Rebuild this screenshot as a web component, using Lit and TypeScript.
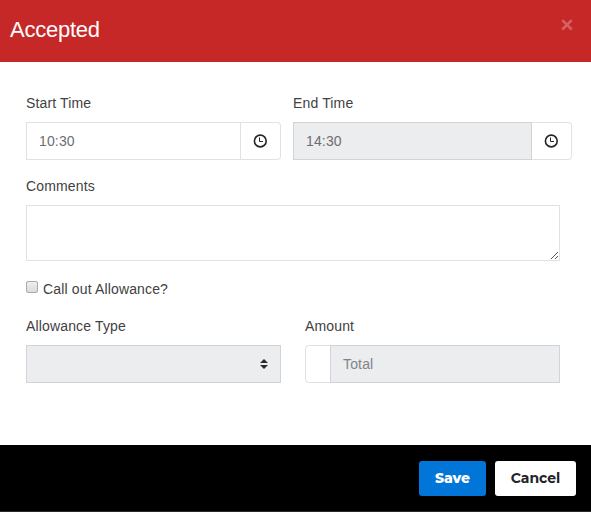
import { LitElement, html, css } from "lit";
import { customElement } from "lit/decorators.js";

const clock = html`<svg class="clock" width="14" height="14" viewBox="0 0 14 14" fill="none">
  <circle cx="7.3" cy="7" r="5.9" stroke="#222427" stroke-width="1.6" />
  <path d="M6.5 3.5V7.5H10" stroke="#222427" stroke-width="1" />
</svg>`;

@customElement("app-root")
export class AppRoot extends LitElement {
  static styles = css`
    :host {
      display: flex;
      flex-direction: column;
      height: 512px;
      background: #fff;
      color: #3f4143;
      font: 14px/20px "Liberation Sans", Arial, sans-serif;
      letter-spacing: 0.15px;
    }
    * { box-sizing: border-box; }
    .header {
      height: 62px;
      flex: none;
      display: flex;
      justify-content: space-between;
      background: #c62828;
      color: #fff;
      padding: 16px 18px 0 10px;
    }
    .title { margin: 0; font-size: 22px; line-height: 28px; font-weight: 400; letter-spacing: -0.25px; }
    .close { margin-top: 3px; width: 12px; height: 12px; }
    .body {
      flex: none;
      height: 383px;
      padding: 31px 31px 0 26px;
    }
    .row { display: flex; }
    .label { display: block; height: 20px; margin-bottom: 9px; }
    .times { gap: 12px; width: 546px; }
    .start { width: 255px; }
    .end { width: 279px; }
    .group { display: flex; height: 38px; }
    .field {
      flex: 1;
      min-width: 0;
      border: 1px solid #e1e2e3;
      padding: 0 12px;
      line-height: 36px;
      color: #6b6e70;
      background: #fff;
    }
    .disabled { background: #ebedee; border-color: #d1d4d7; }
    .addon {
      width: 40px;
      border: 1px solid #e1e2e3;
      border-left: 0;
      border-radius: 0 4px 4px 0;
      display: flex;
      align-items: center;
      justify-content: center;
    }
    .clock { margin-right: 1px; }
    .comments { margin-top: 16px; }
    .area {
      display: flex;
      width: 534px;
      height: 56px;
      border: 1px solid #e1e2e3;
      align-items: flex-end;
      justify-content: flex-end;
    }
    .check { display: flex; margin-top: 18px; gap: 5px; height: 20px; }
    .box {
      width: 12px;
      height: 12px;
      margin-top: 2px;
      border: 1px solid #aaa;
      border-radius: 2px;
      background: linear-gradient(#eee, #dcdcdc);
    }
    .allow { margin-top: 17px; gap: 24px; }
    .half { width: 255px; }
    .select { display: flex; align-items: center; justify-content: flex-end; }
    .prefix {
      width: 25px;
      border: 1px solid #e1e2e3;
      border-right: 0;
      border-radius: 4px 0 0 4px;
    }
    .total { color: #818487; }
    .footer {
      height: 67px;
      flex: none;
      background: #000;
      border-bottom: 1px solid #292929;
      display: flex;
      justify-content: flex-end;
      gap: 9px;
      padding: 16px 15px 0 0;
    }
    .btn {
      height: 35px;
      border: 0;
      border-radius: 3px;
      padding: 0;
      background: #fff;
      color: #212326;
      font: 700 14px/35px Montserrat, Inter, sans-serif;
      letter-spacing: 0;
      width: 81px;
    }
    .save { width: 67px; background: #0275d8; color: #fff; font-weight: 800; letter-spacing: -0.1px; }
  `;

  render() {
    return html`
      <header class="header">
        <h4 class="title">Accepted</h4>
        <svg class="close" viewBox="0 0 12 12"><path d="M1.3 1.1L10.7 10.5M10.7 1.1L1.3 10.5" stroke="#d76060" stroke-width="2.6" /></svg>
      </header>
      <main class="body">
        <div class="row times">
          <div class="start">
            <span class="label">Start Time</span>
            <div class="group"><div class="field">10:30</div><div class="addon">${clock}</div></div>
          </div>
          <div class="end">
            <span class="label">End Time</span>
            <div class="group"><div class="field disabled">14:30</div><div class="addon">${clock}</div></div>
          </div>
        </div>
        <div class="comments">
          <span class="label">Comments</span>
          <div class="area">
            <svg width="8" height="8" viewBox="0 0 8 8" shape-rendering="crispEdges" fill="#555">
              <path d="M0 6h1v1h-1zM1 5h1v1h-1zM2 4h1v1h-1zM3 3h1v1h-1zM4 2h1v1h-1zM5 1h1v1h-1zM6 0h1v1h-1zM4 6h1v1h-1zM5 5h1v1h-1zM6 4h1v1h-1z" />
            </svg>
          </div>
        </div>
        <div class="check"><span class="box"></span><span>Call out Allowance?</span></div>
        <div class="row allow">
          <div class="half">
            <span class="label">Allowance Type</span>
            <div class="group">
              <div class="field disabled select">
                <svg width="8" height="10" viewBox="0 0 8 10" fill="#292b2d"><path d="M0 4L4 0L8 4ZM0 6H8L4 10Z" /></svg>
              </div>
            </div>
          </div>
          <div class="half">
            <span class="label">Amount</span>
            <div class="group"><div class="prefix"></div><div class="field disabled total">Total</div></div>
          </div>
        </div>
      </main>
      <footer class="footer">
        <button class="btn save">Save</button>
        <button class="btn">Cancel</button>
      </footer>
    `;
  }
}
